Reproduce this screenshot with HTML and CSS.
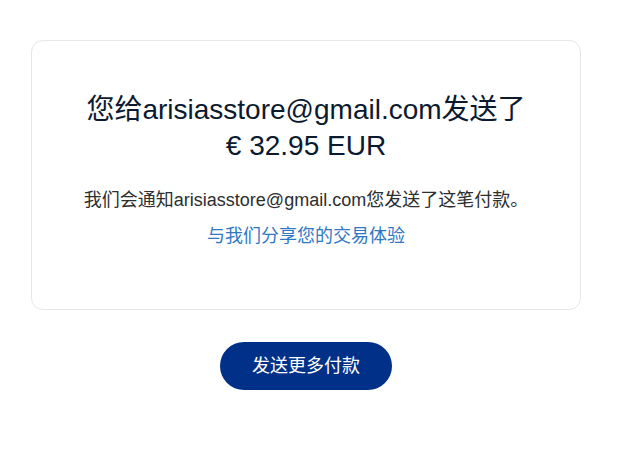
FILE: index.html
```html
<!DOCTYPE html>
<html lang="zh-CN">
<head>
<meta charset="utf-8">
<title>付款已发送</title>
<link rel="stylesheet" href="styles.css">
</head>
<body>
<div class="page">
  <div class="card">
    <h1 class="title">您给arisiasstore@gmail.com发送了<br>€ 32.95 EUR</h1>
    <p class="note">我们会通知arisiasstore@gmail.com您发送了这笔付款。</p>
    <a class="link" href="#">与我们分享您的交易体验</a>
  </div>
  <div class="actions">
    <button class="btn" type="button">发送更多付款</button>
  </div>
</div>
</body>
</html>
```

FILE: styles.css
```css
html, body {
  margin: 0;
  padding: 0;
  background: #ffffff;
}

body {
  font-family: "Liberation Sans", Arial, "Noto Sans CJK SC", sans-serif;
  color: #2c2e2f;
}

.page {
  padding: 40px 47px 0 31px;
}

.card {
  border: 1px solid #e6e6e6;
  border-radius: 12px;
  padding: 51px 20px 61px;
  display: flex;
  flex-direction: column;
  align-items: center;
  text-align: center;
}

.title {
  margin: 0;
  font-size: 28px;
  line-height: 36px;
  font-weight: 400;
  color: #0c1a30;
}

.note {
  margin: 24px 0 0;
  font-size: 18px;
  line-height: 24px;
  color: #2c2e2f;
  white-space: nowrap;
}

.link {
  margin-top: 12px;
  font-size: 18px;
  line-height: 24px;
  color: #2f78c4;
  text-decoration: none;
}

.actions {
  display: flex;
  justify-content: center;
  margin-top: 32px;
}

.btn {
  height: 48px;
  padding: 0 32px;
  border: none;
  border-radius: 24px;
  background: #003087;
  color: #ffffff;
  font-family: "Liberation Sans", Arial, "Noto Sans CJK SC", sans-serif;
  font-size: 18px;
  line-height: 24px;
  cursor: pointer;
}
```
